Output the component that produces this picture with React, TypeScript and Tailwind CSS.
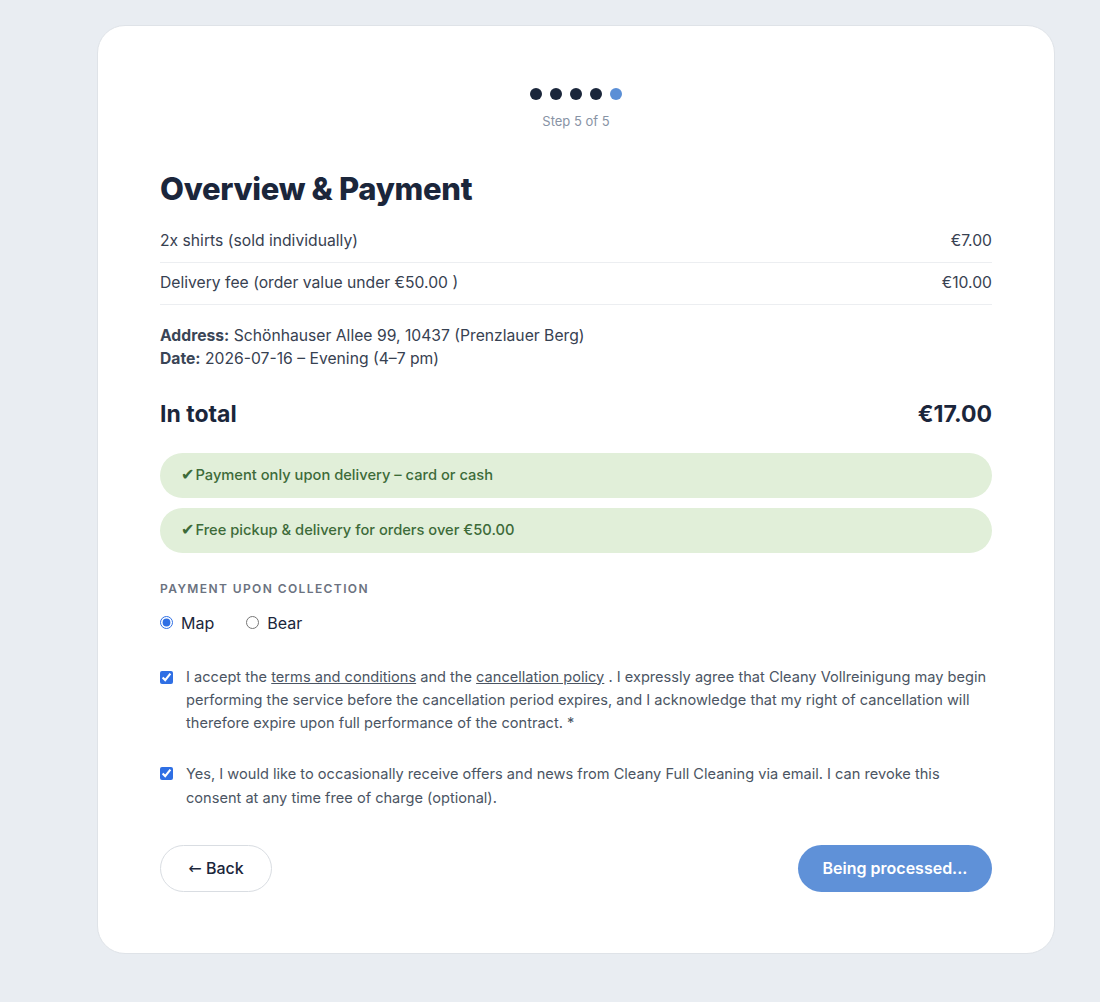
import React, { useState } from 'react';

const lines = [
  { label: '2x shirts (sold individually)', price: '€7.00' },
  { label: 'Delivery fee (order value under €50.00 )', price: '€10.00' },
];

export default function App() {
  const [method, setMethod] = useState<'map' | 'bear'>('map');
  const [terms, setTerms] = useState(true);
  const [news, setNews] = useState(true);

  return (
    <div className="min-h-screen bg-[#e9edf2] pt-[25px] pb-[48px] font-['Inter',sans-serif]">
      <div className="ml-[97px] w-[958px] h-[929px] bg-white rounded-[28px] border border-[#dfe3e8] px-[62px] pt-[62px]">
        {/* Steps */}
        <div className="flex flex-col items-center">
          <div className="flex gap-2">
            <span className="w-3 h-3 rounded-full bg-[#1b263b]" />
            <span className="w-3 h-3 rounded-full bg-[#1b263b]" />
            <span className="w-3 h-3 rounded-full bg-[#1b263b]" />
            <span className="w-3 h-3 rounded-full bg-[#1b263b]" />
            <span className="w-3 h-3 rounded-full bg-[#5b8fd6]" />
          </div>
          <div className="mt-[12px] text-[13px] text-[#8893a5]">Step 5 of 5</div>
        </div>

        <h1 className="mt-[37px] text-[31px] leading-[40px] font-extrabold text-[#1b263b] tracking-[-0.3px]">
          Overview &amp; Payment
        </h1>

        <div className="mt-[12px]">
          {lines.map((l) => (
            <div key={l.label} className="flex justify-between items-center h-[42px] border-b border-[#eceef1] text-[15.7px] text-[#374151]">
              <span>{l.label}</span>
              <span>{l.price}</span>
            </div>
          ))}
        </div>

        <div className="mt-[19px] text-[15.7px] leading-[23px] text-[#374151]">
          <div><span className="font-bold text-[#3a4556]">Address:</span> Schönhauser Allee 99, 10437 (Prenzlauer Berg)</div>
          <div><span className="font-bold text-[#3a4556]">Date:</span> 2026-07-16 – Evening (4–7 pm)</div>
        </div>

        <div className="mt-[28px] flex justify-between items-center text-[23px] leading-[32px] font-bold text-[#1b263b]">
          <span>In total</span>
          <span>€17.00</span>
        </div>

        <div className="mt-[23px] flex flex-col gap-[10px]">
          <div className="h-[45px] rounded-full bg-[#e1efd9] flex items-center pl-[21px] text-[14.7px] font-medium text-[#3d6b39]">
            <span className="font-['DejaVu_Sans',sans-serif] text-[16px] leading-none mr-[1px]">✔</span>Payment only upon delivery – card or cash
          </div>
          <div className="h-[45px] rounded-full bg-[#e1efd9] flex items-center pl-[21px] text-[14.7px] font-medium text-[#3d6b39]">
            <span className="font-['DejaVu_Sans',sans-serif] text-[16px] leading-none mr-[1px]">✔</span>Free pickup &amp; delivery for orders over €50.00
          </div>
        </div>

        <div className="mt-[27px] text-[12px] font-semibold tracking-[1.4px] text-[#6b7280] uppercase">
          Payment upon collection
        </div>

        <div className="mt-[13px] flex items-center gap-[32px] text-[16px] text-[#1b263b]">
          <label className="flex items-center gap-[8px]">
            <input
              type="radio"
              name="pay"
              checked={method === 'map'}
              onChange={() => setMethod('map')}
              className="w-[13px] h-[13px] accent-[#2f6fe4]"
            />
            Map
          </label>
          <label className="flex items-center gap-[8px]">
            <input
              type="radio"
              name="pay"
              checked={method === 'bear'}
              onChange={() => setMethod('bear')}
              className="w-[13px] h-[13px] accent-[#2f6fe4]"
            />
            Bear
          </label>
        </div>

        <div className="mt-[31px] flex gap-[13px] text-[14.6px] leading-[23px] text-[#4b5563]">
          <input
            type="checkbox"
            checked={terms}
            onChange={() => setTerms(!terms)}
            className="mt-[5px] w-[13px] h-[13px] shrink-0 accent-[#2f6fe4]"
          />
          <p>
            I accept the <span className="underline">terms and conditions</span> and the{' '}
            <span className="underline">cancellation policy</span> . I expressly agree that Cleany Vollreinigung may begin
            performing the service before the cancellation period expires, and I acknowledge that my right of cancellation will
            therefore expire upon full performance of the contract. *
          </p>
        </div>

        <div className="mt-[27px] flex gap-[13px] text-[14.6px] leading-[24px] text-[#4b5563]">
          <input
            type="checkbox"
            checked={news}
            onChange={() => setNews(!news)}
            className="mt-[5px] w-[13px] h-[13px] shrink-0 accent-[#2f6fe4]"
          />
          <p>
            Yes, I would like to occasionally receive offers and news from Cleany Full Cleaning via email. I can revoke this
            consent at any time free of charge (optional).
          </p>
        </div>

        <div className="mt-[35px] flex justify-between items-center">
          <button className="h-[47px] w-[112px] rounded-full border border-[#d9dde2] bg-white text-[16px] font-medium text-[#1b263b]">
            <span className="font-['DejaVu_Sans',sans-serif] font-normal">←</span> Back
          </button>
          <button className="h-[47px] w-[194px] rounded-full bg-[#5f91d8] text-[16px] font-semibold text-white">
            Being processed...
          </button>
        </div>
      </div>
    </div>
  );
}
